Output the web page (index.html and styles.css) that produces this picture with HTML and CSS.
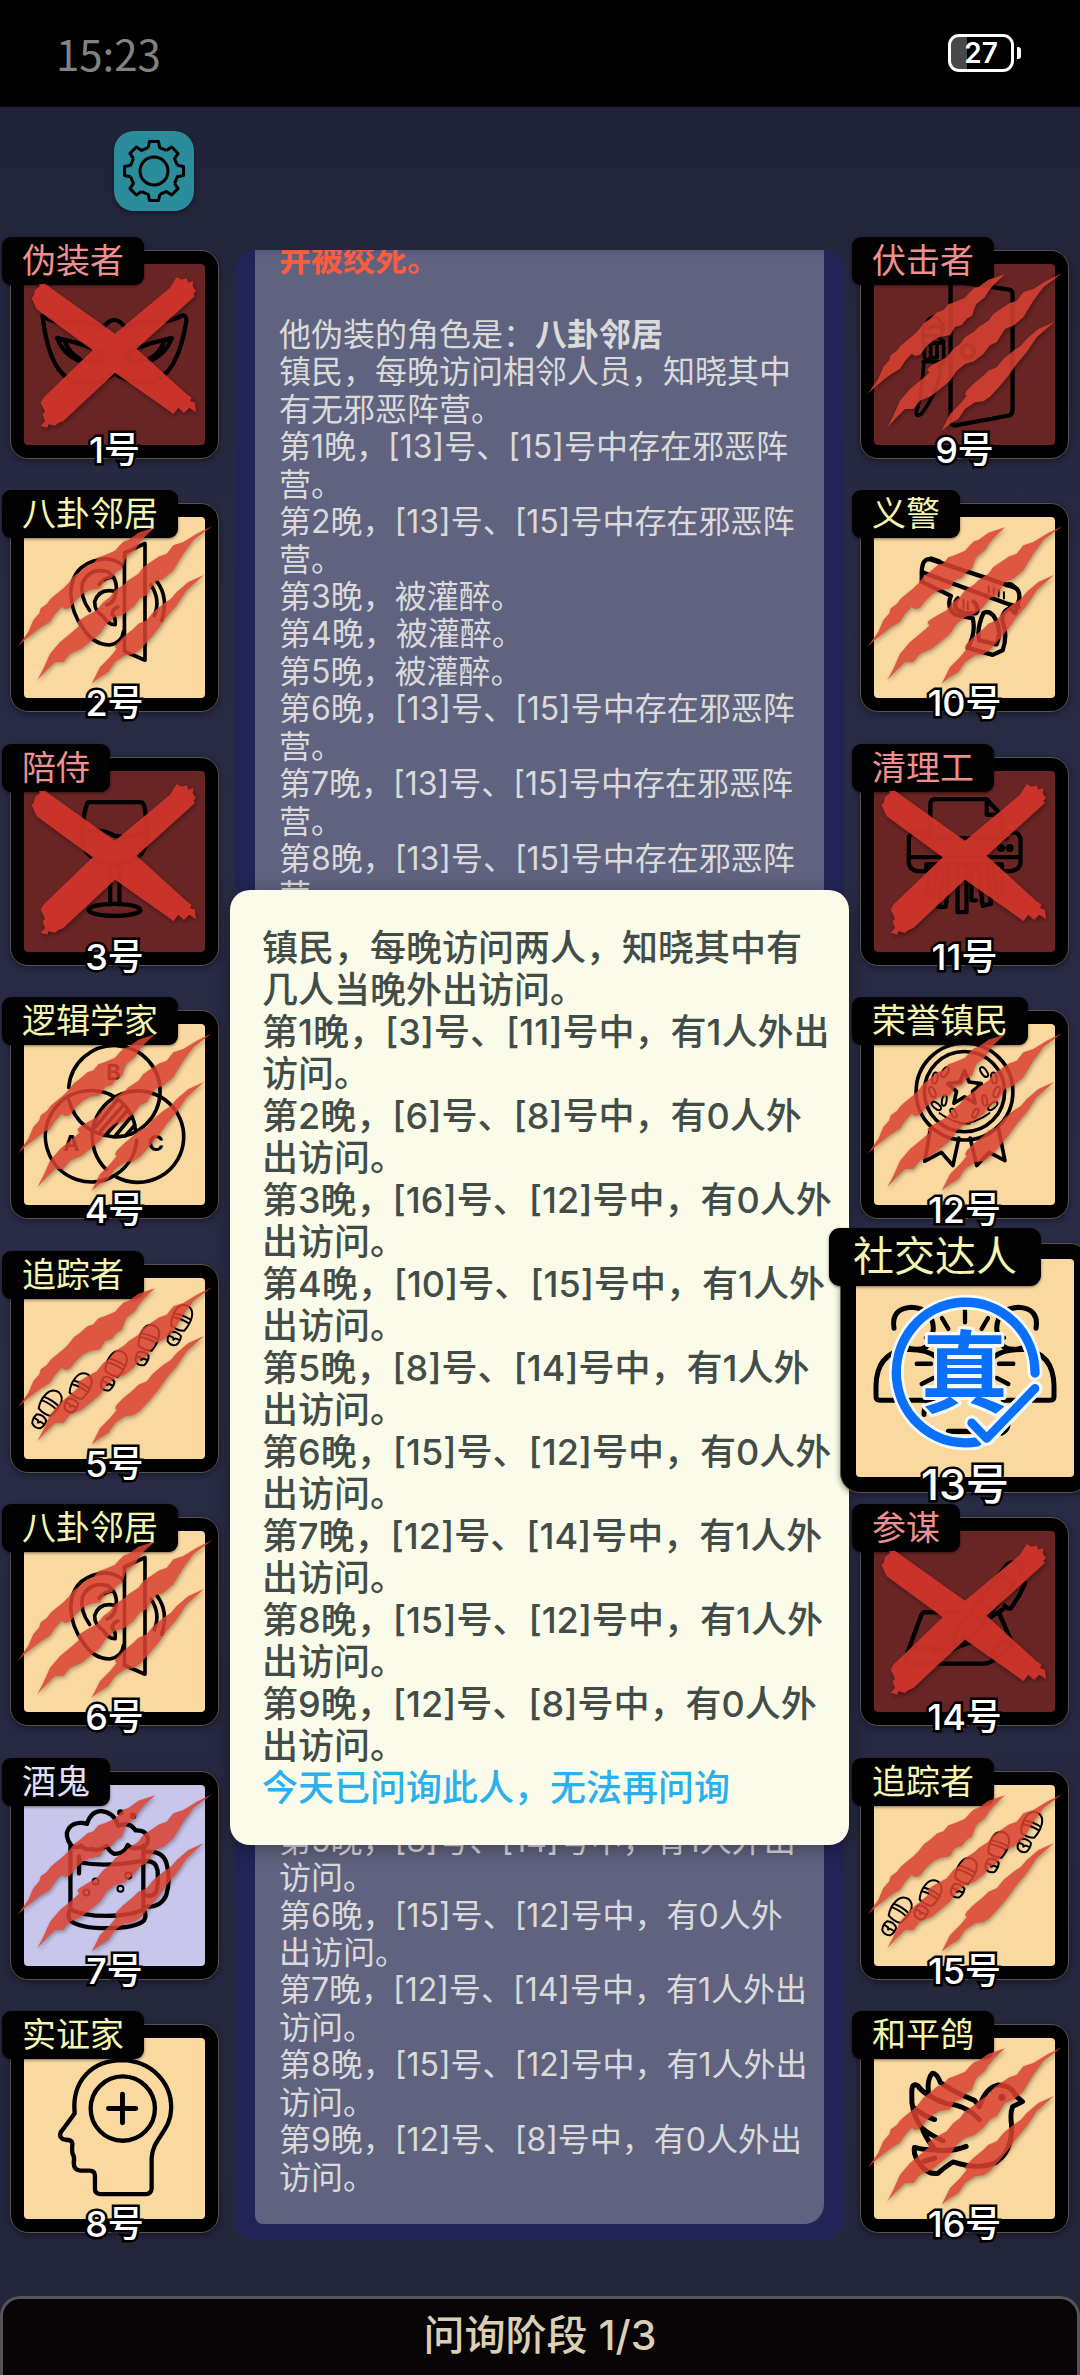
FILE: index.html
```html
<!DOCTYPE html>
<html lang="zh">
<head>
    <meta charset="UTF-8">
    <meta name="viewport" content="width=device-width, initial-scale=1.0">
    <title>问询阶段</title>
    <link rel="stylesheet" href="styles.css">
</head>
<body>
    <svg class="defs" width="0" height="0" aria-hidden="true">
        <symbol id="mark-claw" viewBox="72 890 546 546">
            <g fill="#d94232">
                <path transform="translate(0 779)" d="M465 142 415 158 385 180 372 184 360 195 345 212 315 225 295 232 280 250 262 256 240 275 222 288 205 310 190 325 165 345 152 356 140 372 122 385 118 400 100 420 85 455 53 500 75 480 105 455 125 440 150 425 165 402 185 380 195 387 210 383 228 360 250 340 270 330 300 325 315 300 335 294 350 275 366 266 375 240 380 230 405 210 416 192 430 175 440 165Z"/>
                <path d="M637 917 590 940 550 965 520 975 500 1000 478 1008 460 1020 430 1040 415 1060 385 1080 375 1090 345 1110 330 1130 310 1145 290 1170 262 1185 240 1198 232 1206 238 1216 210 1240 180 1265 150 1300 130 1345 112 1380 140 1350 165 1325 190 1325 210 1300 245 1285 270 1265 300 1240 320 1210 345 1190 372 1182 400 1160 420 1134 440 1125 465 1085 490 1075 520 1050 535 1025 550 1000 580 960Z"/>
                <path d="M612 1064 565 1085 530 1115 512 1136 490 1150 460 1175 440 1200 415 1210 400 1225 370 1250 350 1270 345 1280 350 1286 330 1310 300 1340 275 1390 300 1370 325 1355 345 1325 375 1305 400 1302 420 1288 450 1255 475 1225 500 1190 530 1155 560 1110Z"/>
            </g>
        </symbol>
        <symbol id="mark-cross" viewBox="72 129 546 546">
            <path fill="#d2352b" d="M105 208 120 195 116 190 135 188 165 210 345 338 510 200 530 168 545 176 560 172 565 185 580 180 578 196 588 210 580 218 585 225 410 383 560 520 575 530 570 540 585 545 588 574 568 560 552 576 535 560 520 580 508 570 345 455 190 600 175 606 165 614 145 610 142 620 122 614 135 600 128 580 135 572 122 545 130 530 278 388 110 265 95 232 102 222Z"/>
        </symbol>
        <symbol id="icon-ear" viewBox="72 890 546 546">
            <g class="line thick">
                <path d="M375 998 437 970V1322L375 1295Z"/>
                <path d="M372 1038Q340 1010 300 1018Q215 1035 213 1120Q215 1180 250 1225Q280 1275 330 1276Q368 1270 372 1235"/>
                <path d="M270 1172Q240 1130 248 1090Q270 1040 325 1055Q355 1075 350 1115Q345 1150 322 1155M298 1093Q320 1068 342 1072M348 1115Q300 1103 285 1145Q285 1175 310 1188Q325 1215 347 1215Q350 1195 338 1183Q340 1165 355 1162"/>
                <path d="M455 1095Q485 1140 465 1188M473 1085Q510 1135 487 1202"/>
            </g>
        </symbol>
        <symbol id="print" viewBox="-40 -50 80 130" overflow="visible">
            <path d="M-22 28C-34 0 -32 -46 2 -46C32 -42 30 0 20 28Q0 35 -22 28ZM-28 -10Q0 -16 27 -10M-28 2Q0 -4 26 2M-17 46Q0 36 17 46Q22 62 14 76Q0 86 -14 76Q-22 62 -17 46ZM-18 59H-4L0 65 4 59H18"/>
        </symbol>
        <symbol id="icon-track" viewBox="72 111 546 546">
            <g class="line thin">
                <use href="#print" x="-40" y="-50" width="80" height="130" transform="translate(150 493) rotate(33)"/>
                <use href="#print" x="-40" y="-50" width="80" height="130" transform="translate(242 442) rotate(28)"/>
                <use href="#print" x="-40" y="-50" width="80" height="130" transform="translate(349 375) rotate(25)"/>
                <use href="#print" x="-40" y="-50" width="80" height="130" transform="translate(448 297) rotate(20)"/>
                <use href="#print" x="-40" y="-50" width="80" height="130" transform="translate(547 237) rotate(22)"/>
            </g>
        </symbol>
    </svg>

    <header class="status-bar">
        <span class="clock">15:23</span>
        <div class="battery"><span>27</span></div>
    </header>

    <nav class="toolbar">
        <button class="settings" aria-label="设置">
            <svg viewBox="0 0 64 64">
                <g id="gear-half">
                    <path id="tooth" d="M26.2 8.7 27.5 2.5H36.5L37.8 8.7 44.4 11.4"/>
                    <use href="#tooth" transform="rotate(45 32 32)"/>
                    <use href="#tooth" transform="rotate(90 32 32)"/>
                    <use href="#tooth" transform="rotate(135 32 32)"/>
                </g>
                <use href="#gear-half" transform="rotate(180 32 32)"/>
                <circle cx="32" cy="32" r="14"/>
            </svg>
        </button>
    </nav>

    <main class="board">
        <div class="seats">
            <button class="seat evil">
                <div class="face">
                    <svg viewBox="72 129 546 546">
                        <g class="line">
                            <path d="M128 285Q150 480 245 488Q310 485 345 460Q385 485 450 488Q535 470 562 300Q562 280 545 285Q520 305 440 303Q400 305 380 325Q345 270 308 325Q290 300 235 305Q165 312 128 285Z"/>
                            <path d="M172 352Q230 365 285 385Q310 400 310 420Q270 425 235 420Q190 400 172 352ZM518 352Q460 365 405 385Q380 400 380 420Q420 425 455 420Q500 400 518 352ZM195 362Q210 400 240 415M495 362Q480 400 450 415"/>
                        </g>
                    </svg>
                </div>
                <span class="role">伪装者</span>
                <svg class="mark cross"><use href="#mark-cross"/></svg>
                <span class="number">1号</span>
            </button>
            <button class="seat town">
                <div class="face"><svg><use href="#icon-ear"/></svg></div>
                <span class="role">八卦邻居</span>
                <svg class="mark"><use href="#mark-claw"/></svg>
                <span class="number">2号</span>
            </button>
            <button class="seat evil">
                <div class="face">
                    <svg viewBox="72 120 546 546">
                        <g class="line">
                            <path d="M270 214H423Q431 214 434 224Q445 280 445 312Q440 400 345 402Q250 395 245 315Q248 270 261 222Q263 214 270 214Z"/>
                            <path d="M250 307Q300 290 345 315Q400 328 445 302M332 402V522M360 402V522"/>
                            <ellipse cx="345" cy="539" rx="78" ry="18"/>
                        </g>
                    </svg>
                </div>
                <span class="role">陪侍</span>
                <svg class="mark cross"><use href="#mark-cross"/></svg>
                <span class="number">3号</span>
            </button>
            <button class="seat town">
                <div class="face">
                    <svg viewBox="72 881 546 546">
                        <g class="line thick">
                            <path d="M207 1072A138 138 0 1 1 345 1222Q235 1210 207 1110"/>
                            <path d="M412 1232A138 138 0 1 1 368 1118Q405 1155 408 1200"/>
                            <path d="M320 1320A138 138 0 1 1 350 1342"/>
                            <path d="M288 1192 352 1112M303 1204 370 1128M322 1212 384 1142M348 1218 396 1160M378 1218 406 1186"/>
                        </g>
                        <g class="letters">
                            <text x="342" y="1051">B</text>
                            <text x="215" y="1264">A</text>
                            <text x="470" y="1264">C</text>
                        </g>
                    </svg>
                </div>
                <span class="role">逻辑学家</span>
                <svg class="mark"><use href="#mark-claw"/></svg>
                <span class="number">4号</span>
            </button>
            <button class="seat town">
                <div class="face"><svg><use href="#icon-track"/></svg></div>
                <span class="role">追踪者</span>
                <svg class="mark"><use href="#mark-claw"/></svg>
                <span class="number">5号</span>
            </button>
            <button class="seat town">
                <div class="face"><svg><use href="#icon-ear"/></svg></div>
                <span class="role">八卦邻居</span>
                <svg class="mark"><use href="#mark-claw"/></svg>
                <span class="number">6号</span>
            </button>
            <button class="seat outsider">
                <div class="face">
                    <svg viewBox="72 117 546 546">
                        <g class="line">
                            <path d="M215 300Q192 270 207 248Q225 225 262 234Q275 195 305 196Q345 200 356 240Q390 226 409 254Q445 252 446 285Q442 308 420 306Q395 312 385 298Q375 325 345 325Q328 318 322 300Q300 318 275 310Q255 315 245 300Q230 310 215 300Z"/>
                            <path d="M212 300V490Q200 510 212 526Q240 549 320 549Q410 548 434 526Q444 510 432 490V300M212 492Q250 512 320 512Q400 510 432 492M238 350Q320 366 430 345M238 332V384"/>
                            <path d="M440 318Q490 315 501 350Q516 400 501 450Q485 485 445 484M440 347Q470 345 475 375Q478 420 470 440Q460 455 440 450"/>
                        </g>
                        <g class="line thin">
                            <circle cx="288" cy="408" r="9"/>
                            <circle cx="260" cy="441" r="9"/>
                            <circle cx="387" cy="390" r="9"/>
                            <circle cx="363" cy="430" r="9"/>
                        </g>
                        <circle cx="363" cy="200" r="10"/>
                        <circle cx="401" cy="210" r="10"/>
                    </svg>
                </div>
                <span class="role">酒鬼</span>
                <svg class="mark"><use href="#mark-claw"/></svg>
                <span class="number">7号</span>
            </button>
            <button class="seat town">
                <div class="face">
                    <svg viewBox="72 878 546 546">
                        <g class="line">
                            <path d="M225 1105C215 1010 275 945 370 945C455 948 517 1010 516 1090C515 1160 460 1180 457 1240V1333Q455 1349 440 1349H302Q286 1348 286 1333V1292Q285 1278 270 1278H242Q222 1276 222 1255Q226 1240 218 1225Q216 1215 218 1196Q216 1185 197 1185Q175 1180 183 1162Q200 1140 225 1105Z"/>
                            <circle cx="370" cy="1091" r="97"/>
                        </g>
                        <path class="line heavy" d="M369 1048V1134M327 1091H409"/>
                    </svg>
                </div>
                <span class="role">实证家</span>
                <span class="number">8号</span>
            </button>
        </div>

        <section class="chat">
            <div class="log">
                <p><strong class="danger">并被绞死。</strong><br>
                    <br>
                    他伪装的角色是：<strong>八卦邻居</strong><br>
                    镇民，每晚访问相邻人员，知晓其中<br>
                    有无邪恶阵营。<br>
                    第1晚，[13]号、[15]号中存在邪恶阵<br>
                    营。<br>
                    第2晚，[13]号、[15]号中存在邪恶阵<br>
                    营。<br>
                    第3晚，被灌醉。<br>
                    第4晚，被灌醉。<br>
                    第5晚，被灌醉。<br>
                    第6晚，[13]号、[15]号中存在邪恶阵<br>
                    营。<br>
                    第7晚，[13]号、[15]号中存在邪恶阵<br>
                    营。<br>
                    第8晚，[13]号、[15]号中存在邪恶阵<br>
                    营。</p>
                <p>第5晚，[8]号、[14]号中，有1人外出<br>
                    访问。<br>
                    第6晚，[15]号、[12]号中，有0人外<br>
                    出访问。<br>
                    第7晚，[12]号、[14]号中，有1人外出<br>
                    访问。<br>
                    第8晚，[15]号、[12]号中，有1人外出<br>
                    访问。<br>
                    第9晚，[12]号、[8]号中，有0人外出<br>
                    访问。</p>
            </div>
            <div class="popup" role="dialog">
                <p>镇民，每晚访问两人，知晓其中有<br>
                    几人当晚外出访问。<br>
                    第1晚，[3]号、[11]号中，有1人外出<br>
                    访问。<br>
                    第2晚，[6]号、[8]号中，有0人外<br>
                    出访问。<br>
                    第3晚，[16]号、[12]号中，有0人外<br>
                    出访问。<br>
                    第4晚，[10]号、[15]号中，有1人外<br>
                    出访问。<br>
                    第5晚，[8]号、[14]号中，有1人外<br>
                    出访问。<br>
                    第6晚，[15]号、[12]号中，有0人外<br>
                    出访问。<br>
                    第7晚，[12]号、[14]号中，有1人外<br>
                    出访问。<br>
                    第8晚，[15]号、[12]号中，有1人外<br>
                    出访问。<br>
                    第9晚，[12]号、[8]号中，有0人外<br>
                    出访问。</p>
                <p class="notice">今天已问询此人，无法再问询</p>
            </div>
        </section>

        <div class="seats">
            <button class="seat evil">
                <div class="face">
                    <svg viewBox="162 129 546 546">
                        <g class="line">
                            <path d="M393 180V606Q398 618 412 615L570 586Q580 582 580 570V216Q578 206 560 205L393 180Z"/>
                            <circle cx="445" cy="392" r="19"/>
                        </g>
                        <g class="line thick">
                            <path d="M325 300Q340 280 358 296Q382 322 362 345M325 300Q302 330 312 368M328 322Q350 308 368 326M312 345H350L372 362M318 370 372 366V430M314 372V412Q325 425 333 410V378M333 412H352V366M310 424H368M312 428Q308 520 289 578Q290 592 306 580Q365 500 362 428"/>
                        </g>
                    </svg>
                </div>
                <span class="role">伏击者</span>
                <svg class="mark"><use href="#mark-claw"/></svg>
                <span class="number">9号</span>
            </button>
            <button class="seat town">
                <div class="face">
                    <svg viewBox="162 890 546 546">
                        <g class="line">
                            <path d="M306 1055Q308 1015 330 1017L588 1103Q603 1112 600 1138L588 1180 570 1165Q542 1180 552 1212Q565 1250 550 1292L520 1306 445 1285Q470 1240 460 1196L405 1184Q380 1160 394 1128L306 1085Z"/>
                            <path d="M312 1058 560 1150 598 1162M415 1135Q400 1150 412 1170Q440 1184 470 1180Q482 1165 462 1145M492 1180Q470 1230 480 1262L532 1274Q550 1230 522 1187Q506 1170 492 1180"/>
                            <path d="M335 1015 360 1024M562 1096Q574 1088 586 1102"/>
                        </g>
                        <path class="line thin" d="M508 1100V1118M523 1105V1122M538 1110V1130M554 1117V1136M432 1140V1165M445 1146V1168"/>
                    </svg>
                </div>
                <span class="role">义警</span>
                <svg class="mark"><use href="#mark-claw"/></svg>
                <span class="number">10号</span>
            </button>
            <button class="seat evil">
                <div class="face">
                    <svg viewBox="162 120 546 546">
                        <g class="line">
                            <path d="M332 320V220Q332 205 347 205H502L545 252V320M502 205V252H545M312 323H562"/>
                            <path d="M325 305H287Q267 307 267 327V398Q270 420 295 422H320V402H548V422H572Q600 420 604 398V327Q602 307 582 305H552M267 380H604"/>
                            <path d="M332 405Q328 460 318 490L340 498Q350 450 350 405M368 405Q370 480 354 530H378Q388 470 386 405M414 405V546H441V405M456 405V510H470M476 405 490 527 515 520 504 405M522 405Q528 470 535 500L550 492 545 425"/>
                        </g>
                        <circle cx="545" cy="352" r="12"/>
                        <circle cx="571" cy="352" r="12"/>
                    </svg>
                </div>
                <span class="role">清理工</span>
                <svg class="mark cross"><use href="#mark-cross"/></svg>
                <span class="number">11号</span>
            </button>
            <button class="seat town">
                <div class="face">
                    <svg viewBox="162 881 546 546">
                        <g class="line thick">
                            <circle cx="435" cy="1085" r="146"/>
                            <circle cx="435" cy="1085" r="121"/>
                            <path d="M332 1198 315 1295 365 1268 400 1308 418 1225M452 1225 472 1308 510 1268 557 1293 538 1198"/>
                            <path d="M435 1022 449 1056 486 1061 459 1084 467 1120 435 1101 403 1120 411 1084 384 1061 421 1056Z"/>
                        </g>
                        <g class="line thin">
                            <g id="laurel">
                                <path d="M360 1150Q400 1180 450 1182"/>
                                <ellipse cx="376" cy="1026" rx="8" ry="17" transform="rotate(35 376 1026)"/>
                                <ellipse cx="346" cy="1044" rx="8" ry="17" transform="rotate(10 346 1044)"/>
                                <ellipse cx="338" cy="1086" rx="8" ry="17" transform="rotate(-25 338 1086)"/>
                                <ellipse cx="374" cy="1112" rx="7" ry="16" transform="rotate(10 374 1112)"/>
                                <ellipse cx="350" cy="1128" rx="8" ry="17" transform="rotate(-50 350 1128)"/>
                                <ellipse cx="402" cy="1150" rx="7" ry="15" transform="rotate(-30 402 1150)"/>
                            </g>
                            <use href="#laurel" transform="translate(870 0) scale(-1 1)"/>
                        </g>
                    </svg>
                </div>
                <span class="role">荣誉镇民</span>
                <svg class="mark"><use href="#mark-claw"/></svg>
                <span class="number">12号</span>
            </button>
            <button class="seat town selected">
                <div class="face">
                    <svg viewBox="108 145 654 645" preserveAspectRatio="none">
                        <g class="line heavy">
                            <g id="guest">
                                <path d="M222 350Q212 292 275 288Q338 292 340 350Q338 385 318 405Q290 420 255 405M168 520Q170 425 255 413Q320 410 350 436M168 520V552Q168 563 180 563H320"/>
                            </g>
                            <use href="#guest" transform="translate(870 0) scale(-1 1)"/>
                            <path d="M312 605Q310 570 350 560M545 660Q572 648 562 610M385 655H500"/>
                        </g>
                        <path class="line" d="M435 292V332M366 320 385 352M504 320 485 352M290 455H333M537 455H580M305 515 340 497M565 515 530 497M318 378 345 396M552 378 525 396"/>
                        <g class="stamp">
                            <path class="halo" d="M645 482A208 208 0 1 0 472 686M455 630 500 676 645 528"/>
                            <text x="433" y="576">真</text>
                            <path class="ring" d="M645 482A208 208 0 1 0 472 686"/>
                            <path class="tick halo" d="M455 630 500 676 645 528"/>
                            <path class="tick ring" d="M455 630 500 676 645 528"/>
                        </g>
                    </svg>
                </div>
                <span class="role">社交达人</span>
                <span class="number">13号</span>
            </button>
            <button class="seat evil">
                <div class="face">
                    <svg viewBox="162 948 546 539" preserveAspectRatio="none">
                        <g class="line">
                            <path d="M420 1190H316Q308 1190 304 1200L260 1318Q253 1343 275 1343H490Q515 1343 530 1325L580 1284 538 1190"/>
                            <path d="M580 1284Q550 1268 535 1290Q512 1310 522 1328M618 1102 600 1140 575 1178Q565 1182 556 1170M510 1207 550 1182"/>
                        </g>
                        <path class="line thick" d="M402 1300 408 1248 560 1050Q585 1028 606 1056Q610 1075 598 1090L455 1265ZM450 1190 495 1222M478 1155 522 1188M540 1075 585 1105M402 1300 435 1262M280 1302Q310 1278 314 1304Q335 1282 345 1308Q372 1290 380 1304L450 1282"/>
                    </svg>
                </div>
                <span class="role">参谋</span>
                <svg class="mark cross"><use href="#mark-cross"/></svg>
                <span class="number">14号</span>
            </button>
            <button class="seat town">
                <div class="face"><svg><use href="#icon-track"/></svg></div>
                <span class="role">追踪者</span>
                <svg class="mark"><use href="#mark-claw"/></svg>
                <span class="number">15号</span>
            </button>
            <button class="seat town">
                <div class="face">
                    <svg viewBox="162 878 546 546">
                        <g class="line heavy">
                            <path d="M480 1085Q498 1028 535 1020Q575 1018 592 1055L610 1070 580 1085Q572 1105 577 1140Q580 1220 530 1253Q480 1278 400 1252Q372 1270 355 1286Q325 1292 300 1258Q280 1230 284 1208Q310 1216 340 1215Q400 1222 440 1205"/>
                            <path d="M480 1124Q440 1080 380 1076Q315 1052 294 1022Q275 1010 276 1045Q272 1100 305 1148Q330 1170 370 1188M326 1042Q322 1000 338 984Q352 985 362 1012Q400 1040 465 1066L480 1085M282 1088Q310 1112 345 1124M310 1158Q325 1190 345 1213M345 1240 312 1250"/>
                        </g>
                        <circle cx="548" cy="1057" r="11"/>
                    </svg>
                </div>
                <span class="role">和平鸽</span>
                <svg class="mark"><use href="#mark-claw"/></svg>
                <span class="number">16号</span>
            </button>
        </div>
    </main>

    <footer class="phase">问询阶段 1/3</footer>
</body>
</html>
```

FILE: styles.css
```css
* {
    box-sizing: border-box;
}
body {
    margin: 0;
    min-height: 100vh;
    display: flex;
    flex-direction: column;
    font-family: Inter, "Noto Sans CJK SC", sans-serif;
    font-weight: 400;
    background: linear-gradient(#212338 107px, #292b45 600px, #2a2c48 1400px, #23253b 2300px);
    overflow-x: hidden;
}
button {
    font-family: inherit;
    font-weight: inherit;
    cursor: pointer;
}
p {
    margin: 0;
}
.defs {
    position: absolute;
}

/* status bar */
.status-bar {
    display: flex;
    justify-content: space-between;
    align-items: center;
    height: 107px;
    padding: 0 66px 2px 56px;
    background: #000;
}
.clock {
    font-family: "Noto Sans CJK SC", sans-serif;
    font-size: 42px;
    line-height: 48px;
    color: #828282;
}
.battery {
    position: relative;
    width: 66px;
    height: 38px;
    border: 3px solid #fff;
    border-radius: 11px;
    background: linear-gradient(90deg, #484848 27%, #000 27%);
    color: #fff;
    font-size: 28px;
    font-weight: 600;
    line-height: 32px;
    text-align: center;
}
.battery::after {
    content: "";
    position: absolute;
    top: 10px;
    right: -10px;
    width: 4px;
    height: 12px;
    border-radius: 0 3px 3px 0;
    background: #fff;
}

/* toolbar */
.toolbar {
    height: 143px;
    padding: 24px 114px;
}
.settings {
    display: block;
    width: 80px;
    height: 80px;
    padding: 8px;
    border: 0;
    border-radius: 20px;
    background: #2b8d9c;
    box-shadow: 0 2px 4px rgba(0,0,0,0.4);
}
.settings svg {
    display: block;
    fill: none;
    stroke: #000;
    stroke-width: 3;
    stroke-linejoin: round;
}

/* board */
.board {
    flex: 1;
    display: grid;
    grid-template-columns: 209px minmax(0, 1fr) 209px;
    gap: 16px;
    padding: 0 11px 56px 10px;
}
.seats {
    display: flex;
    flex-direction: column;
    justify-content: space-between;
    padding-bottom: 7px;
}
.seat {
    position: relative;
    width: 209px;
    height: 209px;
    padding: 13px;
    border: 1px solid #57534f;
    border-radius: 18px;
    background: #000;
    box-shadow: 0 2px 6px rgba(0,0,0,0.4);
}
.face {
    height: 100%;
    border-radius: 4px;
    overflow: hidden;
}
.face svg {
    display: block;
    width: 100%;
    height: 100%;
}
.town .face {
    background: #f9d9a0;
}
.evil .face {
    background: #692424;
}
.outsider .face {
    background: #c8c6ea;
}
.line {
    fill: none;
    stroke: #000;
    stroke-width: 13;
    stroke-linecap: round;
    stroke-linejoin: round;
}
.thick {
    stroke-width: 11;
}
.thin {
    stroke-width: 6;
}
.heavy {
    stroke-width: 15;
}
.letters {
    font-size: 66px;
    font-weight: 700;
    text-anchor: middle;
}
.role {
    position: absolute;
    top: -14px;
    left: -9px;
    height: 48px;
    padding: 0 20px;
    border-radius: 9px;
    background: #020202;
    box-shadow: 0 1px 3px rgba(0,0,0,0.5);
    font-size: 34px;
    line-height: 48px;
    white-space: nowrap;
}
.town .role {
    color: #f3f5b0;
}
.evil .role {
    color: #ee8f90;
}
.outsider .role {
    color: #e4e0f6;
}
.mark {
    position: absolute;
    top: 13px;
    left: 13px;
    width: 182px;
    height: 182px;
    overflow: visible;
    opacity: 0.86;
    filter: drop-shadow(1px 2px 2px rgba(0,0,0,0.4));
}
.mark.cross {
    opacity: 0.93;
}
#mark-claw, #mark-cross {
    overflow: visible;
}
.number {
    position: absolute;
    left: 0;
    right: 0;
    bottom: -10px;
    color: #fff;
    font-size: 36px;
    font-weight: 500;
    line-height: 36px;
    -webkit-text-stroke: 5px #000;
    paint-order: stroke fill;
}
.seat.selected {
    z-index: 3;
    width: 250px;
    height: 250px;
    margin: -21px -20px -20px -20px;
    padding: 15px;
    border-radius: 20px;
}
.selected .role {
    top: -16px;
    left: -12px;
    height: 58px;
    padding: 0 24px;
    border-radius: 11px;
    font-size: 41px;
    line-height: 57px;
}
.selected .number {
    bottom: -14px;
    font-size: 43px;
    line-height: 43px;
}
.stamp path {
    fill: none;
    stroke-linecap: round;
    stroke-linejoin: round;
}
.stamp .halo {
    stroke: #f4fbff;
    stroke-width: 44;
}
.stamp .ring {
    stroke: #0a70fa;
    stroke-width: 28;
}
.stamp .tick.ring {
    stroke-width: 26;
}
.stamp text {
    fill: #0a70fa;
    stroke: #f4fbff;
    stroke-width: 18;
    stroke-linejoin: round;
    paint-order: stroke fill;
    font-size: 262px;
    font-weight: 700;
    text-anchor: middle;
}

/* chat log */
.chat {
    position: relative;
    padding: 0 20px 16px;
    border-radius: 20px;
    background: #222457;
}
.log {
    display: flex;
    flex-direction: column;
    justify-content: space-between;
    height: 100%;
    padding: 0 24px 28px;
    border-radius: 0 0 20px 8px;
    background: linear-gradient(#545778, #60637f 8px);
    overflow: hidden;
    color: #dadada;
    font-size: 32px;
    line-height: 1.17;
    white-space: nowrap;
}
.log p:first-child {
    margin-top: -9px;
}
.danger {
    color: #ff5c3e;
}

/* detail popup */
.popup {
    position: absolute;
    top: 640px;
    left: -5px;
    right: -5px;
    z-index: 2;
    padding: 37px 32px 36px;
    border-radius: 20px;
    background: #fafbe8;
    box-shadow: 0 4px 20px rgba(0,0,0,0.35);
    color: #424d49;
    font-size: 36px;
    font-weight: 500;
    line-height: 42px;
    white-space: nowrap;
}
.notice {
    color: #2bafee;
}

/* phase bar */
.phase {
    height: 79px;
    border: 3px solid #555358;
    border-bottom: 0;
    border-radius: 20px 20px 0 0;
    background: #060405;
    color: #dacfb2;
    font-size: 41px;
    font-weight: 500;
    line-height: 72px;
    text-align: center;
}
```
